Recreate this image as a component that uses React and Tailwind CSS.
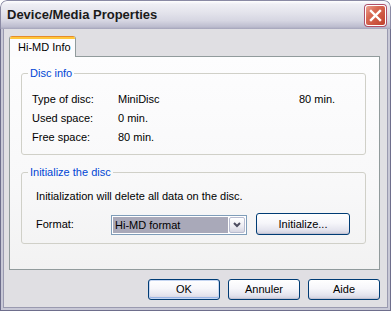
import React from "react";

function XpButton({ children, className = "", isDefault = false }) {
  return (
    <div
      className={
        "flex items-center justify-center rounded-[3px] border border-[#003c74] bg-[linear-gradient(to_bottom,#ffffff_0%,#f6f6fa_45%,#e4e4ee_80%,#cfcfdc_100%)] text-[11px] leading-[13px] text-black " +
        (isDefault ? "shadow-[inset_0_0_0_1px_#c6d6f2,inset_0_-1px_0_1px_#9cb6e6] " : "shadow-[inset_0_-1px_0_0_#c2c2d2] ") +
        className
      }
    >
      {children}
    </div>
  );
}

function Fieldset({ title, className = "", children }) {
  return (
    <fieldset className={"rounded-[3px] border border-[#d0d0c8] px-[6px] " + className}>
      <legend className="px-[2px] text-[11px] leading-[14px] text-[#0046d5]">{title}</legend>
      {children}
    </fieldset>
  );
}

export default function App() {
  return (
    <div className="h-[311px] w-[391px] bg-white font-['Liberation_Sans',Arial,sans-serif] text-[11px] leading-[13px] text-black">
      <div className="flex h-full flex-col overflow-hidden rounded-t-[7px]">
        {/* Title bar */}
        <div className="flex h-[29px] shrink-0 items-center justify-between rounded-t-[7px] border-x border-t border-[#8a8aa4] bg-[linear-gradient(to_bottom,#ffffff_0%,#eeeef4_12%,#e4e4ec_40%,#d6d6e2_70%,#bdbdcf_92%,#a4a4ba_100%)] pl-[6px] pr-[4px]">
          <span className="font-['Liberation_Sans',Arial,sans-serif] text-[13px] font-bold leading-[16px] text-[#1a1a1a]">
            Device/Media Properties
          </span>
          <div className="flex h-[21px] w-[21px] items-center justify-center rounded-[3px] border border-white bg-[linear-gradient(135deg,#eba08f_0%,#d86a54_35%,#c0412c_100%)] shadow-[0_0_0_1px_#b0506a]">
            <svg width="13" height="13" viewBox="0 0 13 13">
              <path d="M2 2 L11 11 M11 2 L2 11" stroke="white" strokeWidth="2.4" strokeLinecap="square" />
            </svg>
          </div>
        </div>

        {/* Frame + body */}
        <div className="flex flex-1 flex-col border-x border-b border-[#6e6e8c]">
          <div className="flex flex-1 flex-col border-x-[2px] border-b-[2px] border-[#c8c8d6]">
            <div className="flex flex-1 flex-col border-x border-b border-[#9a9ab0] bg-[#e0dfe3] pl-[5px] pr-[7px] pt-[7px]">
              {/* Tab strip */}
              <div className="flex h-[20px]">
                <div className="relative z-10 -mb-px flex h-[21px] w-[67px] flex-col overflow-hidden rounded-t-[3px] border-x border-[#919b9c] bg-[#fcfcfe]">
                  <div className="h-[1px] bg-[#e68b2c]" />
                  <div className="h-[2px] bg-[#ffc73c]" />
                  <div className="flex flex-1 items-center pl-[8px] pb-[1px]">Hi-MD Info</div>
                </div>
              </div>

              {/* Panel */}
              <div className="h-[214px] border border-[#919b9c] bg-[linear-gradient(to_bottom,#fdfdfe_0%,#f8f8f9_60%,#f2f2f2_100%)] pl-[11px] pr-[13px] pt-[9px]">
                <Fieldset title="Disc info" className="h-[89px]">
                  <div className="mt-[10px] flex flex-col pl-[4px]">
                    <div className="flex h-[19px] items-center">
                      <span className="w-[86px]">Type of disc:</span>
                      <span className="w-[181px]">MiniDisc</span>
                      <span>80 min.</span>
                    </div>
                    <div className="flex h-[19px] items-center">
                      <span className="w-[86px]">Used space:</span>
                      <span>0 min.</span>
                    </div>
                    <div className="flex h-[19px] items-center">
                      <span className="w-[86px]">Free space:</span>
                      <span>80 min.</span>
                    </div>
                  </div>
                </Fieldset>

                <Fieldset title="Initialize the disc" className="mt-[10px] h-[79px]">
                  <div className="pl-[8px]">
                    <div className="mt-[11px] h-[13px]">Initialization will delete all data on the disc.</div>
                    <div className="mt-[10px] flex h-[22px] items-center">
                      <span className="w-[75px]">Format:</span>
                      <div className="mt-[2px] flex h-[20px] w-[136px] border border-[#7f9db9] bg-white p-px">
                        <div className="flex flex-1 items-center bg-[#a9a9b9] pl-[2px]">Hi-MD format</div>
                        <div className="ml-px flex w-[16px] items-center justify-center rounded-[2px] border border-[#b8bcd0] bg-[linear-gradient(to_bottom,#ffffff_0%,#ececf2_60%,#d6d6e2_100%)]">
                          <svg width="8" height="6" viewBox="0 0 8 6">
                            <path d="M1 1 L4 4 L7 1" stroke="#4d4d60" strokeWidth="2" fill="none" />
                          </svg>
                        </div>
                      </div>
                      <XpButton className="ml-[9px] h-[22px] w-[94px]">Initialize...</XpButton>
                    </div>
                  </div>
                </Fieldset>
              </div>

              {/* Bottom buttons */}
              <div className="mt-[9px] flex justify-end gap-[8px] pr-0">
                <XpButton isDefault className="h-[21px] w-[72px]">OK</XpButton>
                <XpButton className="h-[21px] w-[72px]">Annuler</XpButton>
                <XpButton className="h-[21px] w-[72px]">Aide</XpButton>
              </div>
            </div>
          </div>
        </div>
      </div>
    </div>
  );
}
